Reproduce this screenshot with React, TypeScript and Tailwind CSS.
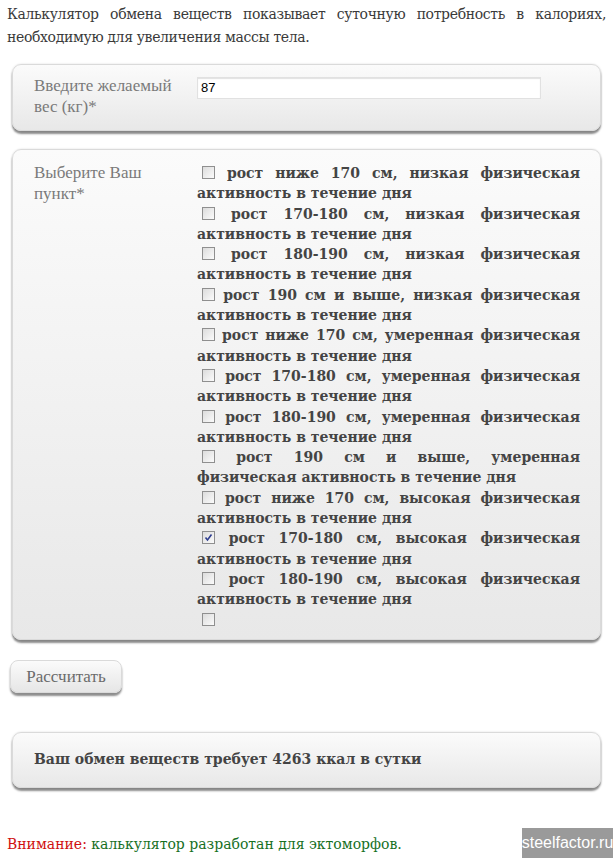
import React from "react";

const serif = "font-['DejaVu_Serif','Liberation_Serif',serif]";

const options: [string, string, boolean][] = [
  ["рост ниже 170 см, низкая физическая", "активность в течение дня", false],
  ["рост 170-180 см, низкая физическая", "активность в течение дня", false],
  ["рост 180-190 см, низкая физическая", "активность в течение дня", false],
  ["рост 190 см и выше, низкая физическая", "активность в течение дня", false],
  ["рост ниже 170 см, умеренная физическая", "активность в течение дня", false],
  ["рост 170-180 см, умеренная физическая", "активность в течение дня", false],
  ["рост 180-190 см, умеренная физическая", "активность в течение дня", false],
  ["рост 190 см и выше, умеренная", "физическая активность в течение дня", false],
  ["рост ниже 170 см, высокая физическая", "активность в течение дня", false],
  ["рост 170-180 см, высокая физическая", "активность в течение дня", true],
  ["рост 180-190 см, высокая физическая", "активность в течение дня", false],
];

function Check({ checked }: { checked: boolean }) {
  return (
    <span className="inline-block ml-[5px] w-[13px] h-[13px] align-[-1px] border border-[#8f8f8f] bg-gradient-to-br from-[#dcdcdc] to-[#fbfbfb] relative">
      {checked && (
        <svg viewBox="0 0 11 11" className="absolute left-0 top-0 w-[11px] h-[11px]">
          <path d="M2.5 5.5 L4.5 8 L8.5 2.5" stroke="#2f3e8f" strokeWidth="1.6" fill="none" />
        </svg>
      )}
    </span>
  );
}

const box =
  "mx-[12px] rounded-[9px] border border-[#dadada] bg-gradient-to-b from-[#fbfbfb] to-[#e8e8e8] shadow-[0_3px_2px_rgba(0,0,0,0.45),0_0_2px_rgba(0,0,0,0.15)]";

export default function App() {
  return (
    <div className={`relative w-[613px] h-[858px] overflow-hidden bg-white ${serif} text-[#333]`}>
      <div className="px-[7px] pt-[3px] text-[14px] leading-[23px] text-[#3a3a3a]">
        <div className="text-justify [text-align-last:justify] tracking-[-0.35px]">
          Калькулятор обмена веществ показывает суточную потребность в калориях,
        </div>
        <div className="tracking-[-0.35px]">необходимую для увеличения массы тела.</div>
      </div>

      <div className={`${box} mt-[15px] h-[67px] flex`}>
        <div className="w-[184px] pl-[21px] pt-[10px] leading-[21px] text-[#7a7a7a] font-['Liberation_Serif',serif] text-[17px]">
          Введите желаемый
          <br />
          вес (кг)*
        </div>
        <div className="pt-[12px]">
          <div className="w-[344px] h-[22px] bg-white border border-[#e1e1e1] shadow-[inset_0_1px_1px_rgba(0,0,0,0.12)] flex items-center pl-[3px] text-[13px] text-black font-['Liberation_Sans',sans-serif]">
            87
          </div>
        </div>
      </div>

      <div className={`${box} mt-[18px] flex pb-[9px]`}>
        <div className="w-[184px] pl-[21px] pt-[12px] text-[17px] leading-[21px] text-[#7a7a7a] font-['Liberation_Serif',serif]">
          Выберите Ваш
          <br />
          пункт*
        </div>
        <div className="w-[383px] pt-[13px] text-[14px] leading-[20.3px] font-bold text-[#444]">
          {options.map(([a, b, c], i) => (
            <div key={i}>
              <div className="text-justify [text-align-last:justify] whitespace-nowrap">
                <Check checked={c} /> {a}
              </div>
              <div className="whitespace-nowrap">{b}</div>
            </div>
          ))}
          <div>
            <Check checked={false} />
          </div>
        </div>
      </div>

      <div className="mt-[20px] ml-[10px]">
        <button className="w-[112px] h-[33px] rounded-[8px] border border-[#dadada] bg-gradient-to-b from-[#fbfbfb] to-[#e6e6e6] shadow-[0_3px_2px_rgba(0,0,0,0.45)] text-[17px] text-[#6b6b6b] font-['Liberation_Serif',serif]">
          Рассчитать
        </button>
      </div>

      <div className={`${box} mt-[39px] h-[56px] flex items-center pl-[21px]`}>
        <div className="text-[14px] font-bold text-[#444]">
          Ваш обмен веществ требует 4263 ккал в сутки
        </div>
      </div>

      <div className="mt-[45px] pl-[7px] text-[14px] leading-[22px]">
        <span className="text-[#d01010]">Внимание:</span>{" "}
        <span className="text-[#17701f]">калькулятор разработан для эктоморфов.</span>
      </div>

      <div className="absolute right-0 bottom-0 w-[91px] h-[30px] bg-[#9a9a9a] text-white text-[16px] flex items-center justify-center font-['Liberation_Sans',sans-serif]">
        steelfactor.ru
      </div>
    </div>
  );
}
